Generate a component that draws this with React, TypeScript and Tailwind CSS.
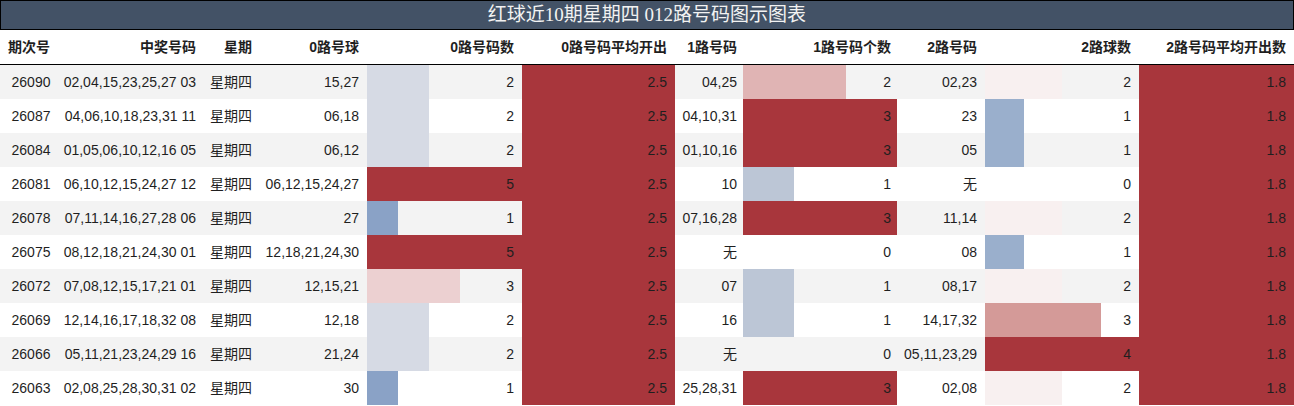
const COLS = 'grid grid-cols-[62px_138px_58px_109px_155px_153px_68px_154px_88px_154px_155px]';

type Row = {
  id: string;
  win: string;
  zero: string;
  n0: number;
  one: string;
  n1: number;
  two: string;
  n2: number;
};

const ROWS: Row[] = [
  { id: '26090', win: '02,04,15,23,25,27 03', zero: '15,27', n0: 2, one: '04,25', n1: 2, two: '02,23', n2: 2 },
  { id: '26087', win: '04,06,10,18,23,31 11', zero: '06,18', n0: 2, one: '04,10,31', n1: 3, two: '23', n2: 1 },
  { id: '26084', win: '01,05,06,10,12,16 05', zero: '06,12', n0: 2, one: '01,10,16', n1: 3, two: '05', n2: 1 },
  { id: '26081', win: '06,10,12,15,24,27 12', zero: '06,12,15,24,27', n0: 5, one: '10', n1: 1, two: '无', n2: 0 },
  { id: '26078', win: '07,11,14,16,27,28 06', zero: '27', n0: 1, one: '07,16,28', n1: 3, two: '11,14', n2: 2 },
  { id: '26075', win: '08,12,18,21,24,30 01', zero: '12,18,21,24,30', n0: 5, one: '无', n1: 0, two: '08', n2: 1 },
  { id: '26072', win: '07,08,12,15,17,21 01', zero: '12,15,21', n0: 3, one: '07', n1: 1, two: '08,17', n2: 2 },
  { id: '26069', win: '12,14,16,17,18,32 08', zero: '12,18', n0: 2, one: '16', n1: 1, two: '14,17,32', n2: 3 },
  { id: '26066', win: '05,11,21,23,24,29 16', zero: '21,24', n0: 2, one: '无', n1: 0, two: '05,11,23,29', n2: 4 },
  { id: '26063', win: '02,08,25,28,30,31 02', zero: '30', n0: 1, one: '25,28,31', n1: 3, two: '02,08', n2: 2 },
];

// diverging blue → white → red scale, one lookup per column
const ZERO_COLORS: Record<number, string> = {
  1: 'bg-[#8aa2c6]',
  2: 'bg-[#d6dae4]',
  3: 'bg-[#ecd0d1]',
  5: 'bg-[#a8363c]',
};
const ONE_COLORS: Record<number, string> = {
  1: 'bg-[#bcc6d6]',
  2: 'bg-[#e0b4b4]',
  3: 'bg-[#a8363c]',
};
const TWO_COLORS: Record<number, string> = {
  1: 'bg-[#9aafcc]',
  2: 'bg-[#f8f0f0]',
  3: 'bg-[#d49a98]',
  4: 'bg-[#a8363c]',
};

const HEADERS = [
  { label: '期次号', align: 'justify-start pl-2' },
  { label: '中奖号码', align: 'justify-end pr-1' },
  { label: '星期', align: 'justify-end pr-1.5' },
  { label: '0路号球', align: 'justify-end pr-2' },
  { label: '0路号码数', align: 'justify-end pr-2' },
  { label: '0路号码平均开出', align: 'justify-end pr-2' },
  { label: '1路号码', align: 'justify-end pr-1.5' },
  { label: '1路号码个数', align: 'justify-end pr-1.5' },
  { label: '2路号码', align: 'justify-end pr-2' },
  { label: '2路球数', align: 'justify-end pr-2' },
  { label: '2路号码平均开出数', align: 'justify-end pr-2' },
];

function BarCell({ value, max, colors, pad }: { value: number; max: number; colors: Record<number, string>; pad: string }) {
  return (
    <div className={`relative flex items-center justify-end ${pad}`}>
      {value > 0 && (
        <div
          className={`absolute left-0 top-0 bottom-0 ${colors[value]}`}
          style={{ width: `${(value / max) * 100}%` }}
        />
      )}
      <span className="relative">{value}</span>
    </div>
  );
}

export default function App() {
  return (
    <div
      className="w-[1294px] h-[406px] bg-white text-[#1f1f1f] overflow-hidden"
      style={{ fontFamily: '"Liberation Sans", "Noto Sans CJK SC", sans-serif' }}
    >
      {/* Title */}
      <div
        className="h-[30px] bg-[#435266] border border-black flex items-center justify-center text-[19px] text-[#f2f2f2]"
        style={{ fontFamily: '"Liberation Serif", "Noto Sans CJK SC", serif' }}
      >
        红球近10期星期四 012路号码图示图表
      </div>

      {/* Header */}
      <div className={`${COLS} h-[35px] border-b border-black text-[14px] font-bold`}>
        {HEADERS.map((h) => (
          <div key={h.label} className={`flex items-center ${h.align}`}>
            {h.label}
          </div>
        ))}
      </div>

      {/* Rows */}
      {ROWS.map((r, i) => (
        <div
          key={r.id}
          className={`${COLS} h-[34px] text-[14px] ${i % 2 === 0 ? 'bg-[#f3f3f3]' : 'bg-white'}`}
        >
          <div className="flex items-center justify-center">{r.id}</div>
          <div className="flex items-center justify-end pr-1">{r.win}</div>
          <div className="flex items-center justify-end pr-1.5">星期四</div>
          <div className="flex items-center justify-end pr-2">{r.zero}</div>
          <BarCell value={r.n0} max={5} colors={ZERO_COLORS} pad="pr-2" />
          <div className="flex items-center justify-end pr-2 bg-[#a8363c]">2.5</div>
          <div className="flex items-center justify-end pr-1.5">{r.one}</div>
          <BarCell value={r.n1} max={3} colors={ONE_COLORS} pad="pr-1.5" />
          <div className="flex items-center justify-end pr-2">{r.two}</div>
          <BarCell value={r.n2} max={4} colors={TWO_COLORS} pad="pr-2" />
          <div className="flex items-center justify-end pr-2 bg-[#a8363c]">1.8</div>
        </div>
      ))}
    </div>
  );
}
